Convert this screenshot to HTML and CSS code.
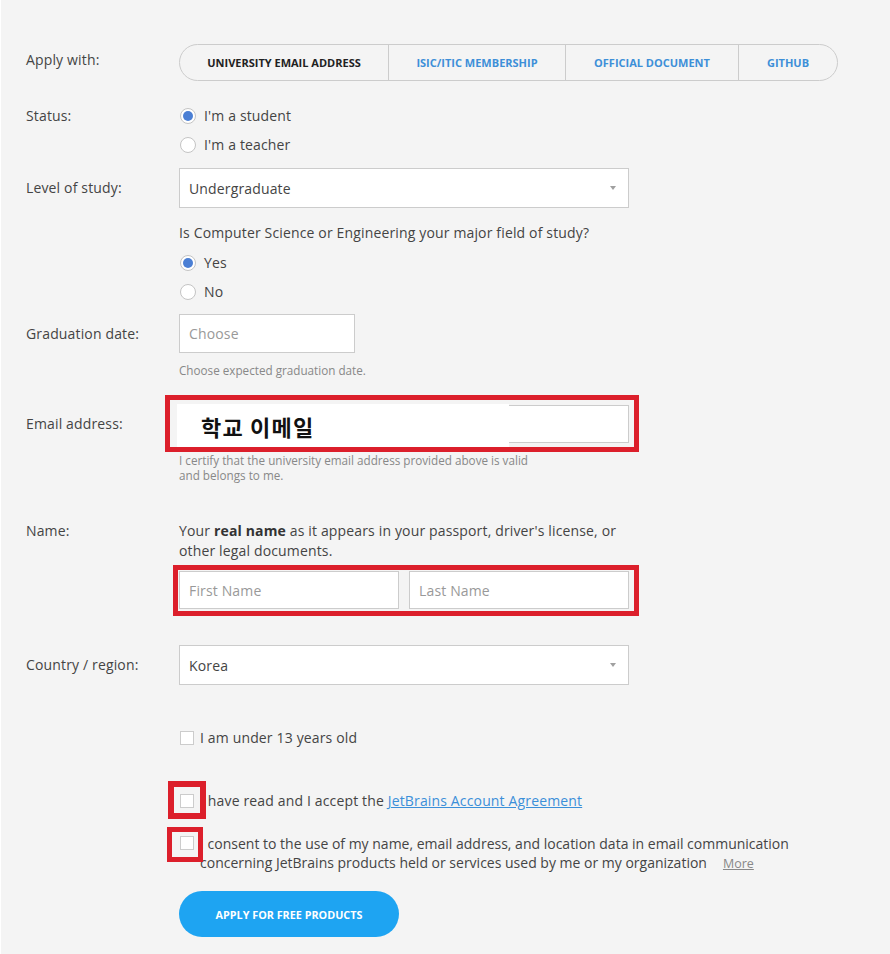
FILE: index.html
```html
<!DOCTYPE html>
<html lang="en">
<head>
<meta charset="utf-8">
<title>Apply for free products</title>
<link rel="stylesheet" href="styles.css">
</head>
<body>
<form class="form">
  <div class="row row-apply">
    <div class="label label-apply">Apply with:</div>
    <div class="tabs">
      <div class="tab tab-active tab-1">University email address</div>
      <div class="tab tab-2">ISIC/ITIC membership</div>
      <div class="tab tab-3">Official document</div>
      <div class="tab tab-4">GitHub</div>
    </div>
  </div>

  <div class="row row-status">
    <div class="label label-tall">Status:</div>
    <div class="options">
      <div class="option"><span class="radio radio-on"></span>I'm a student</div>
      <div class="option"><span class="radio"></span>I'm a teacher</div>
    </div>
  </div>

  <div class="row row-level">
    <div class="label">Level of study:</div>
    <div class="select">Undergraduate<span class="arrow"></span></div>
  </div>

  <div class="row row-question">
    <div class="label"></div>
    <div class="field">
      <div class="question">Is Computer Science or Engineering your major field of study?</div>
      <div class="options">
        <div class="option"><span class="radio radio-on"></span>Yes</div>
        <div class="option"><span class="radio"></span>No</div>
      </div>
    </div>
  </div>

  <div class="row row-grad">
    <div class="label">Graduation date:</div>
    <div class="input input-short placeholder">Choose</div>
  </div>
  <div class="row row-help-grad">
    <div class="label"></div>
    <div class="help">Choose expected graduation date.</div>
  </div>

  <div class="row row-email">
    <div class="label">Email address:</div>
    <div class="email-wrap">
      <div class="input input-wide"></div>
      <div class="email-cover">학교 이메일</div>
      <div class="mark mark-email"></div>
    </div>
  </div>
  <div class="row row-help-email">
    <div class="label"></div>
    <div class="help">I certify that the university email address provided above is valid<br>and belongs to me.</div>
  </div>

  <div class="row row-name">
    <div class="label label-line">Name:</div>
    <div class="field">
      <div class="name-note">Your <b>real name</b> as it appears in your passport, driver's license, or<br>other legal documents.</div>
      <div class="name-wrap">
        <div class="input input-half placeholder">First Name</div>
        <div class="input input-half placeholder">Last Name</div>
        <div class="mark mark-name"></div>
      </div>
    </div>
  </div>

  <div class="row row-country">
    <div class="label">Country / region:</div>
    <div class="select">Korea<span class="arrow"></span></div>
  </div>

  <div class="row row-check row-under">
    <div class="label"></div>
    <div class="check-line"><span class="checkbox"></span><span>I am under 13 years old</span></div>
  </div>

  <div class="row row-check row-agree">
    <div class="label"></div>
    <div class="check-line"><span class="checkbox"><span class="mark mark-cb1"></span></span><span>I have read and I accept the <a class="link">JetBrains Account Agreement</a></span></div>
  </div>

  <div class="row row-check row-consent">
    <div class="label"></div>
    <div class="check-line consent"><span class="checkbox"><span class="mark mark-cb2"></span></span><span class="consent-text">I consent to the use of my name, email address, and location data in email communication concerning JetBrains products held or services used by me or my organization<a class="more">More</a></span></div>
  </div>

  <div class="row row-button">
    <div class="label"></div>
    <div class="button">Apply for free products</div>
  </div>
</form>
</body>
</html>
```

FILE: styles.css
```css
html, body {
  margin: 0;
  padding: 0;
}
body {
  background: #f4f4f4;
  border-left: 1px solid #ffffff;
  font-family: "Open Sans", "Noto Sans", sans-serif;
  font-size: 14px;
  color: #444444;
  width: 889px;
  height: 954px;
  overflow: hidden;
}
.form {
  padding: 44px 0 0 25px;
  letter-spacing: 0.15px;
}
.row {
  display: flex;
  align-items: center;
}
.label {
  width: 153px;
  flex: none;
  line-height: 20px;
}
.label-apply {
  margin-bottom: 5px;
}
.label-tall {
  line-height: 29px;
  align-self: flex-start;
}
.label-line {
  align-self: flex-start;
}

/* tabs */
.tabs {
  display: flex;
  height: 37px;
  border: 1px solid #cccccc;
  border-radius: 19px;
  box-sizing: border-box;
  overflow: hidden;
  letter-spacing: 0;
}
.tab {
  display: flex;
  align-items: center;
  justify-content: center;
  font-size: 11px;
  font-weight: 700;
  text-transform: uppercase;
  color: #3d8fd8;
  border-left: 1px solid #cccccc;
  box-sizing: border-box;
}
.tab-active {
  color: #222222;
  border-left: none;
}
.tab-1 { width: 208px; }
.tab-2 { width: 177px; }
.tab-3 { width: 173px; }
.tab-4 { width: 99px; }

/* radios */
.row-status { margin-top: 20px; align-items: flex-start; }
.options { display: flex; flex-direction: column; }
.option {
  display: flex;
  align-items: center;
  height: 29px;
  color: #444444;
}
.radio {
  width: 16px;
  height: 16px;
  box-sizing: border-box;
  border: 1px solid #c4c4c4;
  border-radius: 50%;
  background: #ffffff;
  margin: 0 8px 0 1px;
  display: flex;
  align-items: center;
  justify-content: center;
}
.radio-on::after {
  content: "";
  width: 10px;
  height: 10px;
  border-radius: 50%;
  background: #4b7fd4;
}

/* selects & inputs */
.row-level { margin-top: 9px; }
.select {
  width: 450px;
  height: 40px;
  box-sizing: border-box;
  background: #ffffff;
  border: 1px solid #cccccc;
  padding: 0 10px 0 9px;
  display: flex;
  align-items: center;
  justify-content: space-between;
  color: #444444;
}
.arrow {
  width: 0;
  height: 0;
  border-left: 3px solid transparent;
  border-right: 3px solid transparent;
  border-top: 4px solid #a0a0a0;
  margin-right: 2px;
}
.row-question { margin-top: 15px; align-items: flex-start; }
.question { line-height: 20px; margin-bottom: 5px; }

.row-grad { margin-top: 8px; }
.input {
  height: 38px;
  box-sizing: border-box;
  background: #ffffff;
  border: 1px solid #cccccc;
  padding: 0 9px;
  display: flex;
  align-items: center;
}
.placeholder { color: #999999; }
.input-short { width: 176px; height: 39px; }
.input-wide { width: 450px; }
.input-half { width: 220px; }

.help {
  font-size: 11.7px;
  line-height: 15px;
  color: #888888;
  letter-spacing: 0;
}
.row-help-grad { margin-top: 10px; }
.row-email { margin-top: 27px; }
.row-help-email { margin-top: 10px; align-items: flex-start; }

.email-wrap { position: relative; }
.email-cover {
  position: absolute;
  left: -2px;
  top: -1px;
  width: 332px;
  height: 43px;
  background: #ffffff;
  box-sizing: border-box;
  padding-left: 24px;
  display: flex;
  align-items: center;
  font-family: "Noto Sans CJK KR", "Noto Sans", sans-serif;
  font-size: 22px;
  font-weight: 700;
  letter-spacing: 1.2px;
  color: #111111;
}
.mark {
  position: absolute;
  box-sizing: border-box;
  border: 5px solid #dc1f2b;
  pointer-events: none;
}
.mark-email {
  left: -14px;
  top: -10px;
  right: -10px;
  bottom: -9px;
}

.row-name { margin-top: 38px; align-items: flex-start; }
.name-note { line-height: 20px; color: #444444; }
.name-note b { color: #333333; }
.name-wrap {
  position: relative;
  display: flex;
  gap: 10px;
  margin-top: 10px;
}
.mark-name {
  left: -6px;
  top: -6px;
  right: -10px;
  bottom: -7px;
}

.row-country { margin-top: 36px; }

.check-line {
  display: flex;
  align-items: center;
  line-height: 20px;
  color: #444444;
}
.checkbox {
  position: relative;
  width: 14px;
  height: 14px;
  box-sizing: border-box;
  border: 1px solid #cccccc;
  background: #ffffff;
  margin: 0 6px 0 1px;
  flex: none;
}
.row-under { margin-top: 43px; }
.row-agree { margin-top: 43px; }
.row-consent { margin-top: 23px; }
.consent {
  align-items: flex-start;
  line-height: 19px;
  letter-spacing: 0;
}
.consent .checkbox { margin-top: 2px; }
.consent-text { width: 620px; }
.mark-cb1 {
  left: -13px;
  top: -14px;
  width: 38px;
  height: 38px;
  border-width: 6px;
}
.mark-cb2 {
  left: -14px;
  top: -10px;
  width: 36px;
  height: 35px;
}
.link {
  color: #3b8fd9;
  text-decoration: underline;
}
.more {
  display: inline-block;
  color: #888888;
  font-size: 12.5px;
  line-height: 17px;
  vertical-align: baseline;
  text-decoration: underline;
  margin-left: 16px;
}

.row-button { margin-top: 19px; }
.button {
  width: 220px;
  height: 46px;
  border-radius: 23px;
  background: #1ea4f2;
  color: #ffffff;
  font-size: 10.8px;
  font-weight: 700;
  text-transform: uppercase;
  letter-spacing: 0;
  display: flex;
  align-items: center;
  justify-content: center;
}
```
